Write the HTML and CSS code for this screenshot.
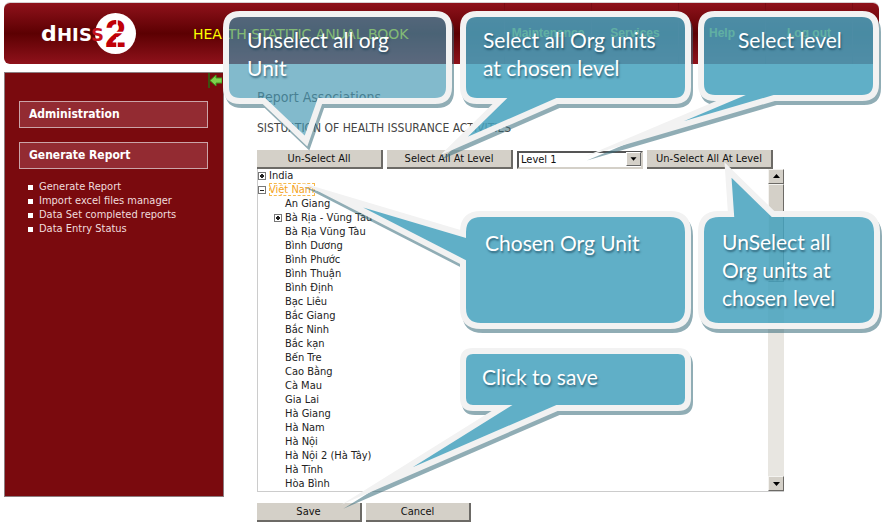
FILE: index.html
```html
<!DOCTYPE html>
<html lang="en">
<head>
<meta charset="utf-8">
<title>DHIS 2 - Report Associations</title>
<link rel="stylesheet" href="styles.css">
</head>
<body>
<header class="header">
  <svg class="logo" width="96" height="44" viewBox="0 0 96 44" role="img" aria-label="dhis2">
    <circle cx="74.500" cy="21.500" r="20.500" fill="#fff"/>
    <text class="logo-word" x="0" y="29">d</text>
    <text class="logo-caps" x="16" y="29">HI</text>
    <text class="logo-caps" x="38" y="29">S</text>
    <text class="logo-small" x="50" y="29">S</text>
    <text class="logo-two" x="64" y="35">2</text>
    <path d="M62 20.500H86M76 6V15M76 25V37" stroke="#fff" stroke-width="1.500"/>
  </svg>
  <h1 class="title">HEALTH STATITIC ANUAL BOOK</h1>
  <nav class="menu">
    <a href="#">Maintenance</a>
    <a href="#">Services</a>
    <a href="#">Help</a>
    <a href="#">Log out</a>
  </nav>
</header>

<div class="page">
  <aside class="sidebar">
    <a class="collapse" href="#" aria-label="Hide menu">
      <svg width="14" height="15" viewBox="0 0 14 15"><path d="M1 0V15" stroke="#2a6a12" stroke-width="1.500"/><path d="M2 7.500L8 2V5H14V10H8V13Z" fill="#7fd24c" stroke="#3f9a1e"/></svg>
    </a>
    <h2>Administration</h2>
    <h2>Generate Report</h2>
    <ul>
      <li><a href="#">Generate Report</a></li>
      <li><a href="#">Import excel files manager</a></li>
      <li><a href="#">Data Set completed reports</a></li>
      <li><a href="#">Data Entry Status</a></li>
    </ul>
  </aside>

  <main class="main">
    <h3>Report Associations</h3>
    <h4>SISTUATION OF HEALTH ISSURANCE ACTIVITIES</h4>
    <div class="toolbar">
      <button type="button">Un-Select All</button>
      <button type="button">Select All At Level</button>
      <span class="level">
        <select aria-label="Level"><option>Level 1</option></select>
        <svg width="15" height="14" viewBox="0 0 15 14"><path d="M4 5H11L7.500 9Z"/></svg>
      </span>
      <button type="button">Un-Select All At Level</button>
    </div>
    <div class="listbox">
      <ul class="tree">
        <li><i class="toggle plus"></i>India</li>
        <li><i class="toggle"></i><span class="chosen">Việt Nam</span>
          <ul>
            <li>An Giang</li>
            <li><i class="toggle plus"></i>Bà Rịa - Vũng Tàu</li>
            <li>Bà Rịa Vũng Tàu</li>
            <li>Bình Dương</li>
            <li>Bình Phước</li>
            <li>Bình Thuận</li>
            <li>Bình Định</li>
            <li>Bạc Liêu</li>
            <li>Bắc Giang</li>
            <li>Bắc Ninh</li>
            <li>Bắc kạn</li>
            <li>Bến Tre</li>
            <li>Cao Bằng</li>
            <li>Cà Mau</li>
            <li>Gia Lai</li>
            <li>Hà Giang</li>
            <li>Hà Nam</li>
            <li>Hà Nội</li>
            <li>Hà Nội 2 (Hà Tây)</li>
            <li>Hà Tĩnh</li>
            <li>Hòa Bình</li>
          </ul>
        </li>
      </ul>
      <div class="scrollbar">
        <span class="arrow"><svg width="11" height="11" viewBox="0 0 11 11"><path d="M2 7H9L5.500 3Z"/></svg></span>
        <span class="thumb"></span>
        <span class="arrow end"><svg width="11" height="11" viewBox="0 0 11 11"><path d="M2 4H9L5.500 8Z"/></svg></span>
      </div>
    </div>
    <div class="actions">
      <button type="button">Save</button>
      <button type="button">Cancel</button>
    </div>
  </main>
</div>

<svg class="bubbles" width="882" height="529" viewBox="0 0 882 529" aria-hidden="true">
  <defs>
    <path id="b1" d="M240 14H435Q449 14 449 28V87Q449 101 435 101H320L306 141L264 101H240Q226 101 226 87V28Q226 14 240 14Z"/>
    <path id="b2" d="M477 14H674Q688 14 688 28V87Q688 101 674 101H557L454 146L500 101H477Q463 101 463 87V28Q463 14 477 14Z"/>
    <path id="b3" d="M715 14H862Q876 14 876 28V84Q876 98 862 98H774L634 139L731 98H715Q701 98 701 84V28Q701 14 715 14Z"/>
    <path id="b4" d="M481 214H670Q688 214 688 232V308Q688 326 670 326H481Q463 326 463 308V262L332 195L463 234V232Q463 214 481 214Z"/>
    <path id="b5" d="M719 214H731L728 170L773 214H859Q877 214 877 232V308Q877 326 859 326H719Q701 326 701 308V232Q701 214 719 214Z"/>
    <path id="b6" d="M473 351H678Q688 351 688 361V398Q688 408 678 408H557L377 486L502 408H473Q463 408 463 398V361Q463 351 473 351Z"/>
    <mask id="m1" maskUnits="userSpaceOnUse" x="0" y="0" width="882" height="529"><path fill="#fff" d="M0 0H882V529H0Z"/><use href="#b1"/></mask>
    <mask id="m2" maskUnits="userSpaceOnUse" x="0" y="0" width="882" height="529"><path fill="#fff" d="M0 0H882V529H0Z"/><use href="#b2"/></mask>
    <mask id="m3" maskUnits="userSpaceOnUse" x="0" y="0" width="882" height="529"><path fill="#fff" d="M0 0H882V529H0Z"/><use href="#b3"/></mask>
    <mask id="m4" maskUnits="userSpaceOnUse" x="0" y="0" width="882" height="529"><path fill="#fff" d="M0 0H882V529H0Z"/><use href="#b4"/></mask>
    <mask id="m5" maskUnits="userSpaceOnUse" x="0" y="0" width="882" height="529"><path fill="#fff" d="M0 0H882V529H0Z"/><use href="#b5"/></mask>
    <mask id="m6" maskUnits="userSpaceOnUse" x="0" y="0" width="882" height="529"><path fill="#fff" d="M0 0H882V529H0Z"/><use href="#b6"/></mask>
  </defs>
  <g mask="url(#m1)"><use class="shade" href="#b1" x="2" y="4"/></g><use class="bubble pale" href="#b1"/>
  <g mask="url(#m2)"><use class="shade" href="#b2" x="2" y="4"/></g><use class="bubble" href="#b2"/>
  <g mask="url(#m3)"><use class="shade" href="#b3" x="2" y="4"/></g><use class="bubble" href="#b3"/>
  <g mask="url(#m4)"><use class="shade" href="#b4" x="2" y="4"/></g><use class="bubble" href="#b4"/>
  <g mask="url(#m5)"><use class="shade" href="#b5" x="2" y="4"/></g><use class="bubble" href="#b5"/>
  <g mask="url(#m6)"><use class="shade" href="#b6" x="2" y="4"/></g><use class="bubble" href="#b6"/>
</svg>
<p class="note n1">Unselect all org<br>Unit</p>
<p class="note n2">Select all Org units<br>at chosen level</p>
<p class="note n3">Select level</p>
<p class="note n4">Chosen Org Unit</p>
<p class="note n5">UnSelect all<br>Org units at<br>chosen level</p>
<p class="note n6">Click to save</p>
</body>
</html>
```
FILE: styles.css
```css
* { box-sizing: border-box; }
body {
  margin: 0;
  padding: 3px 3px 0 4px;
  position: relative;
  background: #fff;
  color: #222;
  font: 11px/14px "DejaVu Sans Condensed", "DejaVu Sans", sans-serif;
}
h1, h2, h3, h4, p, ul { margin: 0; padding: 0; font-weight: normal; }
ul { list-style: none; }
a { color: inherit; text-decoration: none; }

.header {
  display: flex;
  align-items: center;
  height: 61px;
  border-radius: 6px;
  background: linear-gradient(#8f121b, #5c0002 50%, #8f121b);
  box-shadow: 0 -1px 0 #d8d0d2;
  overflow: hidden;
}
.logo { margin-left: 37px; flex: none; }
.logo-word { font: bold 22px "DejaVu Sans", sans-serif; fill: #fff; }
.logo-caps { font: bold 18px "DejaVu Sans", sans-serif; fill: #fff; }
.logo-small { font: bold 18px "DejaVu Sans", sans-serif; fill: #c4101a; }
.logo-two { font: bold 38px "Liberation Sans", sans-serif; fill: #c00008; }
.title {
  margin-left: 56px;
  color: #ff0;
  font: 14px/20px "DejaVu Sans", sans-serif;
  white-space: nowrap;
}
.menu { display: flex; align-self: stretch; margin-left: auto; margin-right: 26px; }
.menu a {
  width: 87px;
  border-left: 1px solid #7a0c14;
  color: #ff0;
  font: bold 12px/60px "Liberation Sans", sans-serif;
  text-align: center;
}
.menu a:last-child { width: 88px; border-right: 1px solid #7a0c14; }

.page { display: flex; align-items: flex-start; margin-top: 8px; }
.sidebar {
  flex: none;
  width: 220px;
  height: 425px;
  padding: 0 15px 0 14px;
  border: 1px solid #8c7d80;
  background: #7a0a0e;
  color: #fff;
}
.collapse { display: block; height: 15px; margin: 0 -14px 13px 0; }
.collapse svg { display: block; margin-left: auto; }
.sidebar h2 {
  height: 27px;
  margin-bottom: 14px;
  padding-left: 9px;
  border: 1px solid #cba4a8;
  background: #932b32;
  font: bold 12px/25px "DejaVu Sans Condensed", "DejaVu Sans", sans-serif;
}
.sidebar ul { margin-top: -3px; padding: 0 0 0 9px; }
.sidebar li { display: flex; align-items: center; gap: 6px; color: #f0dcdd; }
.sidebar li::before { content: ""; width: 5px; height: 5px; background: #fff; }

.main { flex: 1; min-width: 0; padding: 15px 95px 0 33px; }
.main h3 { color: #555; font: 14px/20px "DejaVu Sans Condensed", "DejaVu Sans", sans-serif; }
.main h4 { margin-top: 14px; color: #444; font-size: 12px; line-height: 14px; }
.toolbar { display: flex; gap: 4px; margin-top: 15px; }
button {
  height: 19px;
  padding: 0;
  border: 0;
  border-right: 2px solid #6c6a66;
  border-bottom: 2px solid #6c6a66;
  background: #d4d0c8;
  color: #111;
  font: inherit;
}
.toolbar > * { flex: 0 0 126px; }
.level { display: flex; align-items: center; position: relative; height: 19px; }
.level select {
  width: 100%;
  height: 18px;
  padding: 0 2px;
  border: 2px solid;
  border-color: #555 #d4d0c8 #d4d0c8 #555;
  border-radius: 0;
  background: #fff;
  color: #111;
  font: inherit;
  appearance: none;
}
.level svg {
  position: absolute;
  right: 2px;
  top: 2px;
  border: 1px solid;
  border-color: #fff #666 #666 #fff;
  background: #d4d0c8;
  pointer-events: none;
}
.listbox {
  display: flex;
  height: 323px;
  border: 1px solid #ccc;
  border-top: 0;
  border-right: 0;
  overflow: hidden;
}
.tree { flex: 1; }
.tree > li { padding-left: 11px; }
.tree ul { padding-left: 16px; }
.toggle {
  float: left;
  width: 8px;
  height: 8px;
  margin: 3px 3px 0 -11px;
  border: 1px solid #777;
  background: linear-gradient(#222, #222) center / 4px 1px no-repeat;
}
.toggle.plus {
  background:
    linear-gradient(#222, #222) 1px 2px / 4px 2px no-repeat,
    linear-gradient(#222, #222) 2px 1px / 2px 4px no-repeat;
}
.chosen { color: #f5a21a; outline: 1px dashed #f8b84a; outline-offset: -1px; }
.scrollbar { display: flex; flex-direction: column; width: 16px; background: #e8e6e1; }
.arrow, .thumb {
  border: 1px solid;
  border-color: #f4f3f0 #6c6a66 #6c6a66 #f4f3f0;
  background: #d4d0c8;
}
.arrow { display: grid; place-items: center; height: 15px; }
.thumb { height: 98px; }
.end { margin-top: auto; }
.actions { display: flex; gap: 4px; margin-top: 11px; }
.actions button { width: 105px; }

.bubbles { position: absolute; left: 0; top: 0; pointer-events: none; }
.bubble {
  fill: rgba(70, 162, 190, .86);
  stroke: #f2f2f2;
  stroke-width: 6px;
  stroke-miterlimit: 40;
}
.pale { fill: rgba(65, 151, 177, .66); }
.shade {
  fill: #3c6f7e;
  stroke: #3c6f7e;
  stroke-width: 6px;
  stroke-miterlimit: 40;
  opacity: .57;
}
.note {
  position: absolute;
  color: #fff;
  font: 21px/28px Lato, sans-serif;
  text-shadow: 1px 2px 2px rgba(20, 60, 80, .6);
  white-space: nowrap;
}
.n1 { left: 247px; top: 26px; }
.n2 { left: 483px; top: 26px; }
.n3 { left: 738px; top: 26px; }
.n4 { left: 485px; top: 229px; }
.n5 { left: 722px; top: 228px; }
.n6 { left: 482px; top: 363px; }
```
